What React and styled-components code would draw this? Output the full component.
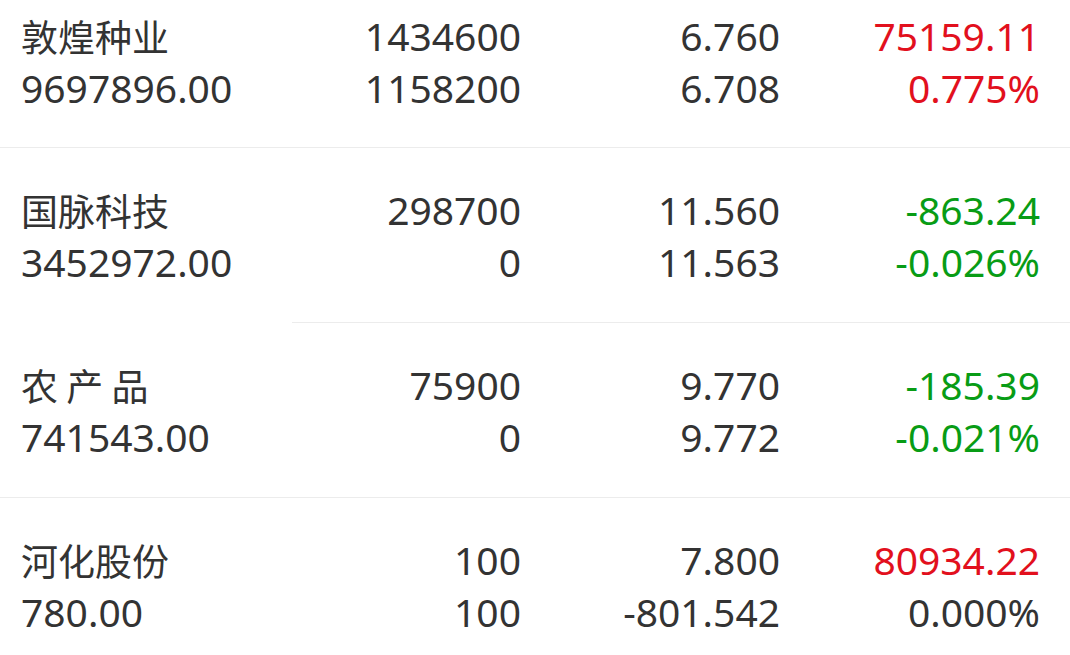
import React from 'react';
import styled, { createGlobalStyle } from 'styled-components';

const rows = [
  {
    name: '敦煌种业', amount: '9697896.00',
    qty: '1434600', avail: '1158200',
    price: '6.760', cost: '6.708',
    pnl: '75159.11', pct: '0.775%', trend: 'up',
  },
  {
    name: '国脉科技', amount: '3452972.00',
    qty: '298700', avail: '0',
    price: '11.560', cost: '11.563',
    pnl: '-863.24', pct: '-0.026%', trend: 'down',
  },
  {
    name: '农 产 品', amount: '741543.00',
    qty: '75900', avail: '0',
    price: '9.770', cost: '9.772',
    pnl: '-185.39', pct: '-0.021%', trend: 'down',
  },
  {
    name: '河化股份', amount: '780.00',
    qty: '100', avail: '100',
    price: '7.800', cost: '-801.542',
    pnl: '80934.22', pct: '0.000%', trend: 'up', flatPct: true,
  },
];

const dividers = [0, 292, 0];

const colors = {
  up: '#e2101d',
  down: '#089c15',
  flat: '#333333',
};

const App = () => {
  return (
    <>
      <GlobalStyle />
      <List>
        {rows.map((r, i) => (
          <React.Fragment key={r.name}>
            <Row first={i === 0}>
              <Cell>
                <Name>{r.name}</Name>
                <Value>{r.amount}</Value>
              </Cell>
              <Cell right>
                <Value>{r.qty}</Value>
                <Value>{r.avail}</Value>
              </Cell>
              <Cell right>
                <Value>{r.price}</Value>
                <Value>{r.cost}</Value>
              </Cell>
              <Cell right>
                <Value color={colors[r.trend]}>{r.pnl}</Value>
                <Value color={r.flatPct ? colors.flat : colors[r.trend]}>{r.pct}</Value>
              </Cell>
            </Row>
            {i < rows.length - 1 && <Divider inset={dividers[i]} />}
          </React.Fragment>
        ))}
      </List>
    </>
  );
};

const GlobalStyle = createGlobalStyle`
  body {
    margin: 0;
    background: #ffffff;
    font-family: "Noto Sans", "Noto Sans CJK SC", sans-serif;
    color: #333333;
  }
`;

const List = styled.div`
  width: 1070px;
  height: 655px;
  overflow: hidden;
  background: #ffffff;
`;

const Row = styled.div`
  display: grid;
  grid-template-columns: 240px 260px 259px 260px;
  padding: ${(p) => (p.first ? '10px 30px 33px 21px' : '36px 30px 34px 21px')};
`;

const Cell = styled.div`
  display: flex;
  flex-direction: column;
  align-items: ${(p) => (p.right ? 'flex-end' : 'flex-start')};
`;

const Value = styled.div`
  font-size: 39px;
  line-height: 52px;
  height: 52px;
  white-space: nowrap;
  color: ${(p) => p.color || '#333333'};
`;

const Name = styled(Value)`
  font-size: 37px;
  font-family: "Noto Sans CJK SC", "Noto Sans", sans-serif;
`;

const Divider = styled.div`
  height: 1px;
  margin-left: ${(p) => p.inset}px;
  background: #ececec;
`;

export default App;
